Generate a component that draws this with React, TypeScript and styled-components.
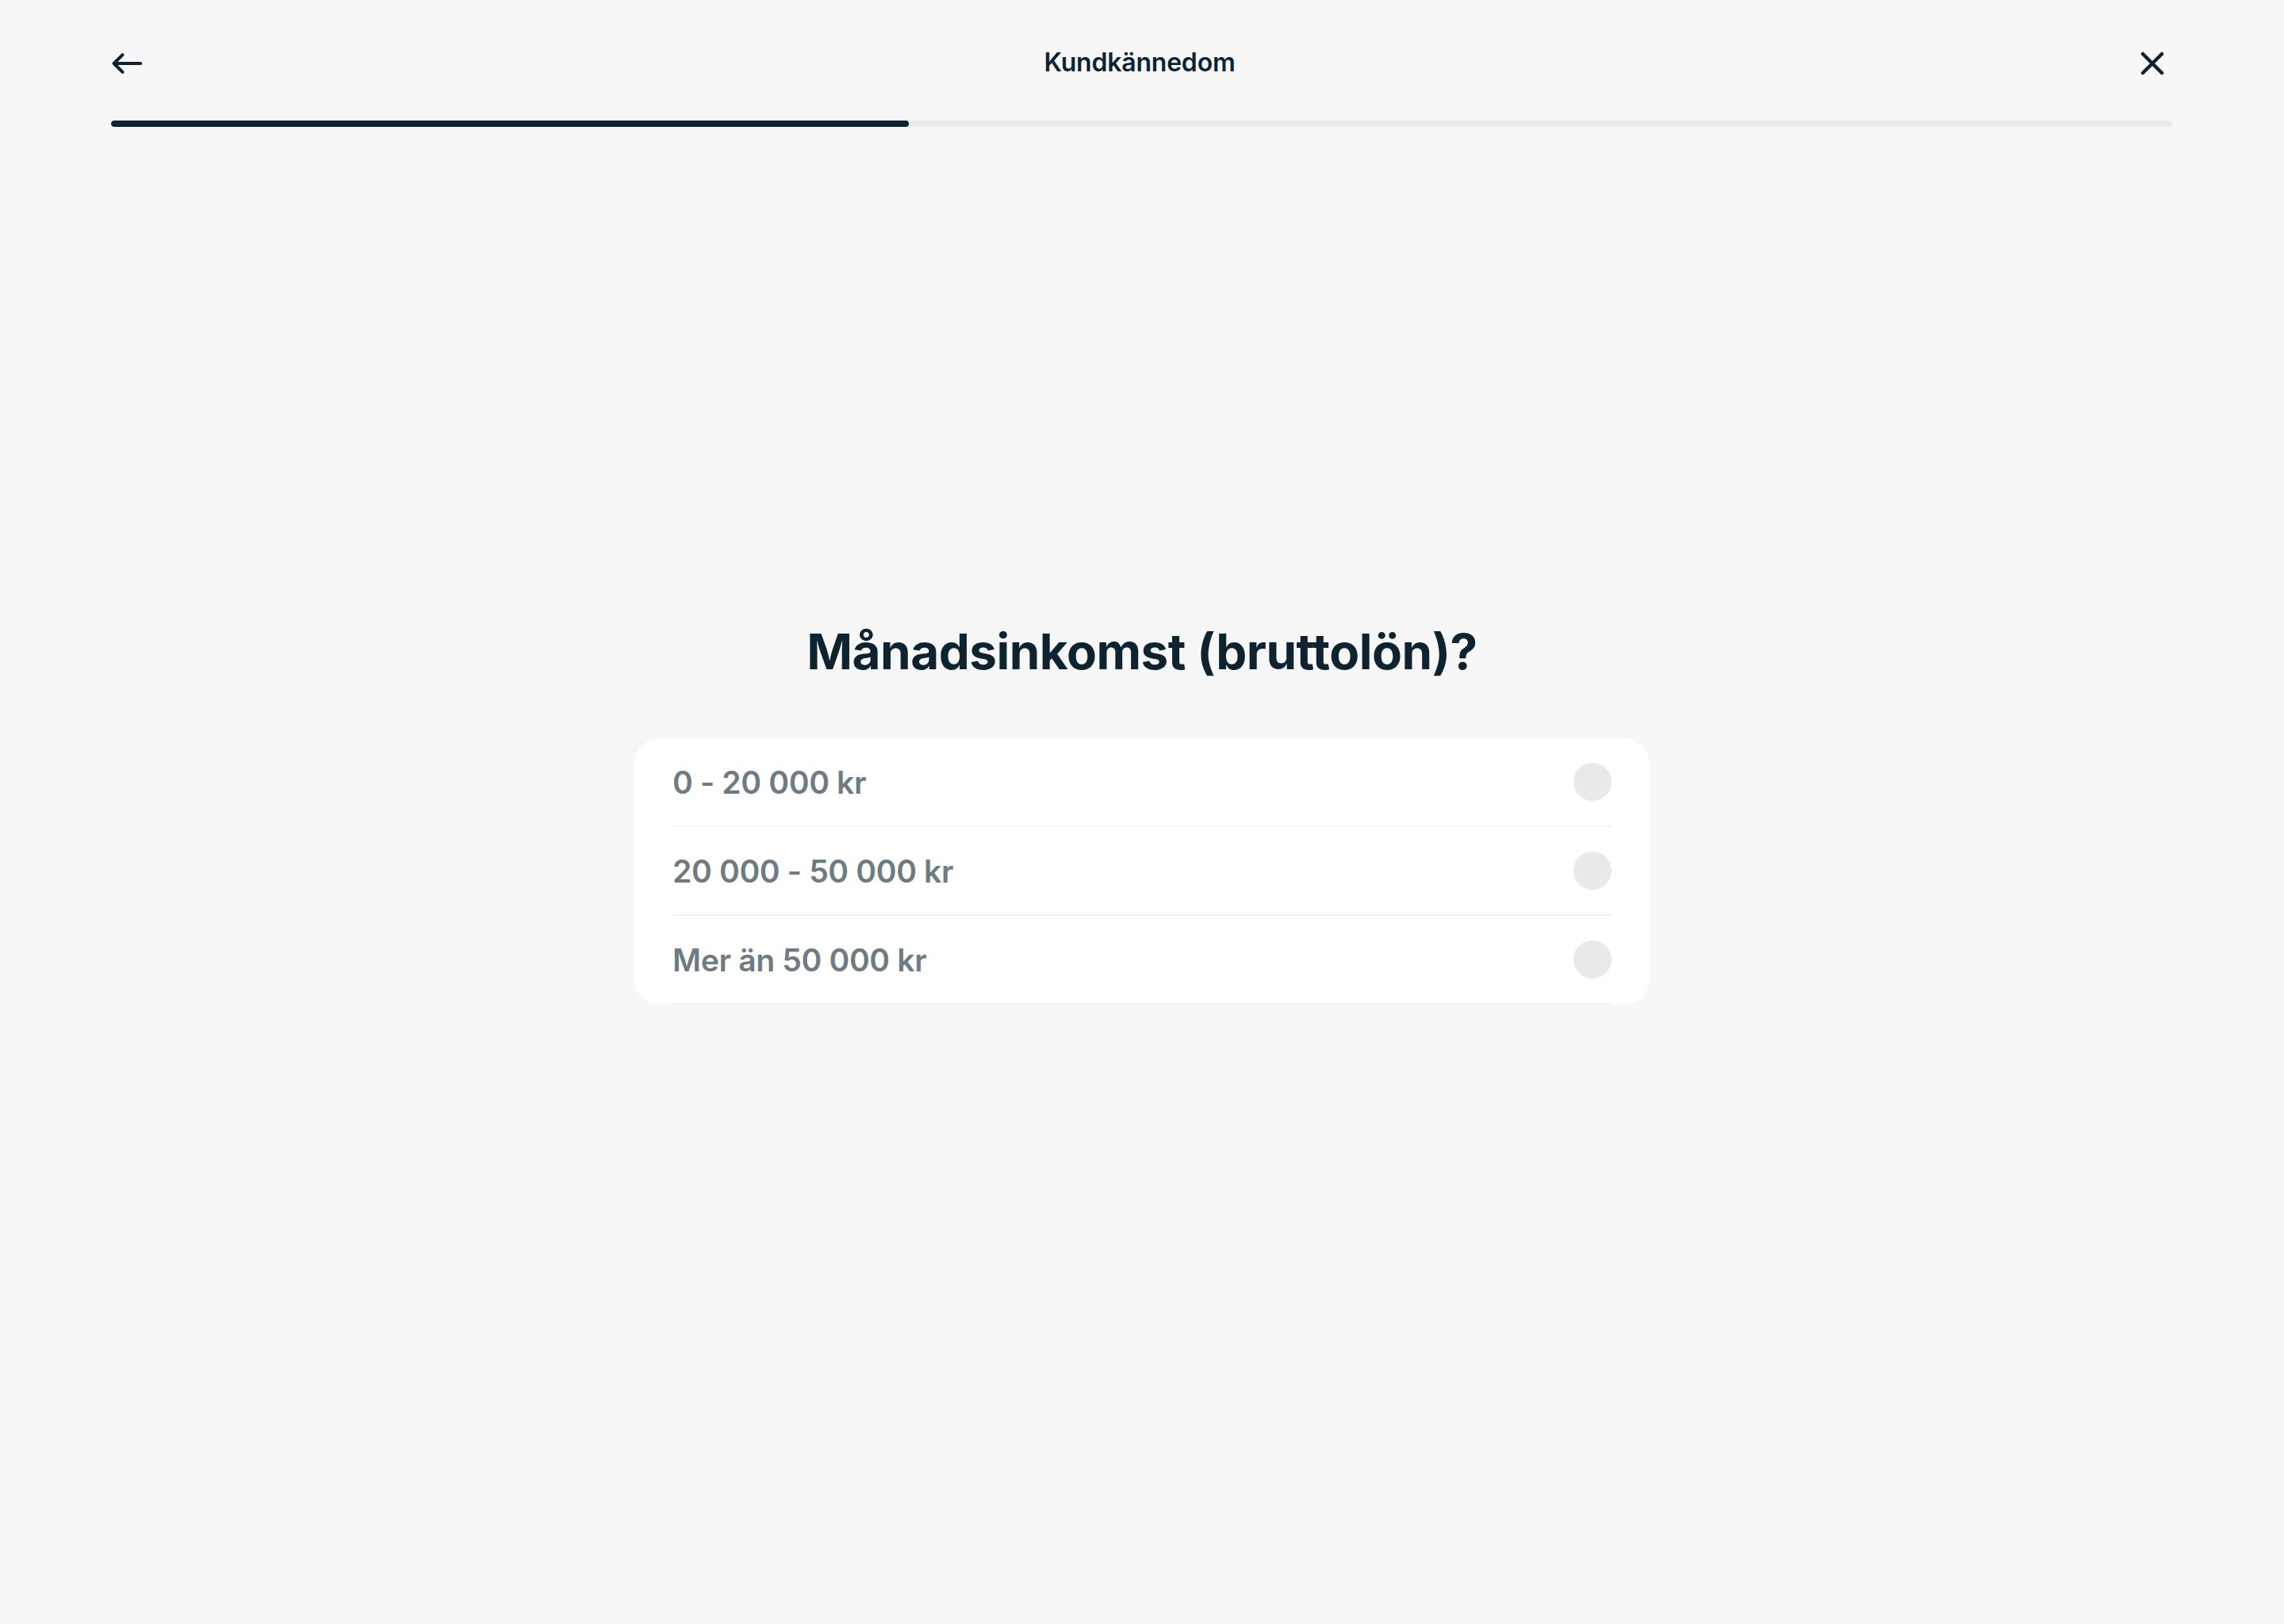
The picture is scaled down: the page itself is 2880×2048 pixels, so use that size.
import { useState } from "react";
import styled, { createGlobalStyle } from "styled-components";

const ink = "#0e2330";

const GlobalStyle = createGlobalStyle`
  html, body {
    margin: 0;
    padding: 0;
    background: #f7f7f7;
  }
  body {
    font-family: Inter, "Noto Sans", sans-serif;
    color: ${ink};
  }
  * {
    box-sizing: border-box;
  }
`;

const Page = styled.div`
  min-height: 100vh;
  padding: 40px 140px 0;
  display: flex;
  flex-direction: column;
`;

const TopBar = styled.div`
  height: 80px;
  display: flex;
  align-items: center;
  justify-content: space-between;
`;

const IconButton = styled.button`
  width: 40px;
  height: 40px;
  padding: 0;
  display: flex;
  align-items: center;
  justify-content: center;
  background: transparent;
  border: none;
  cursor: pointer;
  color: ${ink};
`;

const Title = styled.span`
  font-size: 32px;
  font-weight: 600;
  letter-spacing: -0.2px;
  line-height: 1;
  margin-top: -2px;
  color: ${ink};
`;

const Track = styled.div`
  margin-top: 32px;
  height: 8px;
  border-radius: 4px;
  background: #ebebeb;
  overflow: hidden;
`;

const Fill = styled.div`
  height: 100%;
  border-radius: 4px;
  background: ${ink};
`;

const Main = styled.main`
  display: flex;
  flex-direction: column;
  align-items: center;
  padding-top: 624px;
`;

const Heading = styled.h1`
  margin: 0 0 71px;
  font-size: 62px;
  line-height: 76px;
  font-weight: 700;
  letter-spacing: -0.5px;
  color: ${ink};
`;

const Card = styled.div`
  width: 1280px;
  padding: 0 48px;
  background: #fff;
  border-radius: 32px;
`;

const Option = styled.label`
  height: 112px;
  display: flex;
  align-items: center;
  justify-content: space-between;
  background: #fff;
  border-bottom: 2px solid #f2f2f2;
  cursor: pointer;
`;

const OptionText = styled.span`
  font-size: 39px;
  font-weight: 600;
  letter-spacing: -0.3px;
  color: #6e7b82;
`;

const Radio = styled.span<{ $checked: boolean }>`
  width: 48px;
  height: 48px;
  border-radius: 50%;
  background: ${({ $checked }) => ($checked ? ink : "#e8e9eb")};
`;

const BackIcon = () => (
  <svg width="44" height="30" viewBox="0 0 44 30" fill="none">
    <path
      d="M41 15H4M16 3L4 15L16 27"
      stroke="currentColor"
      strokeWidth="4.5"
      strokeLinecap="round"
      strokeLinejoin="round"
    />
  </svg>
);

const CloseIcon = () => (
  <svg width="30" height="30" viewBox="0 0 30 30" fill="none">
    <path
      d="M3 3L27 27M27 3L3 27"
      stroke="currentColor"
      strokeWidth="4.5"
      strokeLinecap="round"
    />
  </svg>
);

const options = ["0 - 20 000 kr", "20 000 - 50 000 kr", "Mer än 50 000 kr"];

export default function App() {
  const [selected, setSelected] = useState<string | null>(null);
  const progress = 1006 / 2600;

  return (
    <>
      <GlobalStyle />
      <Page>
        <TopBar>
          <IconButton aria-label="Tillbaka">
            <BackIcon />
          </IconButton>
          <Title>Kundkännedom</Title>
          <IconButton aria-label="Stäng" style={{ marginRight: 6 }}>
            <CloseIcon />
          </IconButton>
        </TopBar>
        <Track>
          <Fill style={{ width: `${progress * 100}%` }} />
        </Track>
        <Main>
          <Heading>Månadsinkomst (bruttolön)?</Heading>
          <Card>
            {options.map((opt) => (
              <Option key={opt} onClick={() => setSelected(opt)}>
                <OptionText>{opt}</OptionText>
                <Radio $checked={selected === opt} />
              </Option>
            ))}
          </Card>
        </Main>
      </Page>
    </>
  );
}
